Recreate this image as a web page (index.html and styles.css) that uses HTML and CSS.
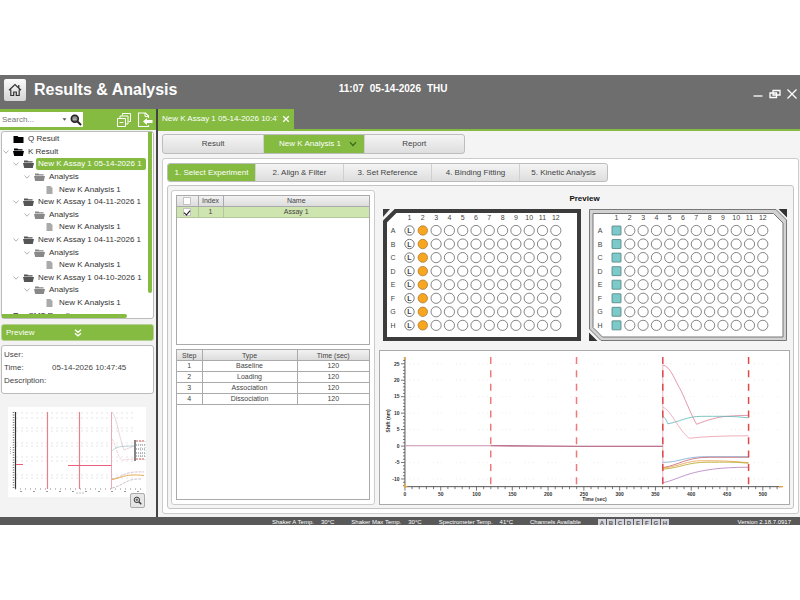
FILE: index.html
```html
<!DOCTYPE html>
<html lang="en">
<head>
<meta charset="utf-8">
<title>Results &amp; Analysis</title>
<link rel="stylesheet" href="styles.css">
</head>
<body>
<svg class="defs" aria-hidden="true">
  <symbol id="folder" viewBox="0 0 10 8"><path d="M0 1h4l1 1h5v6H0z"/></symbol>
  <symbol id="open" viewBox="0 0 11 8"><path d="M1 0.5h3.5l.8.8H9.6v1.2H1z"/><path d="M0 3h11l-1.2 5H1.2z"/></symbol>
  <symbol id="file" viewBox="0 0 6 8"><path d="M0 0h4l2 2v6H0z"/></symbol>
  <symbol id="chev" viewBox="0 0 6 4"><path d="M.5.5 3 3.2 5.5.5" fill="none" stroke="#a0a0a0" stroke-width=".8"/></symbol>
</svg>
<div class="app">
  <header class="top">
    <button class="home" aria-label="Home"><svg viewBox="0 0 14 14"><path d="M1 7.3 7 1.6l6 5.7M10.8 2v2.8M2.8 6.5v6h2.9V9h2.6v3.500h2.9v-6" fill="none" stroke="#333" stroke-width="1.2"/></svg></button>
    <h1>Results &amp; Analysis</h1>
    <div class="clock"><span>11:07</span><span>05-14-2026</span><span>THU</span></div>
    <div class="win">
      <button aria-label="Minimize"><svg viewBox="0 0 12 12"><path d="M1.500 8h9" stroke="#fff" stroke-width="1.300"/></svg></button>
      <button aria-label="Restore"><svg viewBox="0 0 12 12"><path d="M4 2.500h7v4.500H4zM1 5h6.500v4.500H1z" fill="none" stroke="#fff" stroke-width="1.300"/></svg></button>
      <button aria-label="Close"><svg viewBox="0 0 12 12"><path d="M1.500 1.500l9 9m0-9l-9 9" stroke="#fff" stroke-width="1.300"/></svg></button>
    </div>
  </header>

  <div class="body">
    <aside class="side">
      <div class="tools">
        <div class="search">
          <input type="text" aria-label="Search" placeholder="Search...">
          <svg class="drop" viewBox="0 0 4 3"><path d="M0 .3h4L2 2.700z" fill="#555"/></svg>
          <button aria-label="Find"><svg viewBox="0 0 12 12"><circle cx="4.800" cy="4.800" r="3.500" fill="#777" stroke="#222" stroke-width="1.500"/><path d="M7.500 7.500l3.500 3.500" stroke="#222" stroke-width="2"/><path d="M3 4h3.500M3 5.500h3.500" stroke="#ddd" stroke-width=".6"/></svg></button>
        </div>
        <button class="tool" aria-label="Collapse all"><svg viewBox="0 0 16 16"><path d="M1.500 6.500h8v8h-8zM4 6V4h8v8h-2M6.500 3.500v-2h8v8H12.500M3.500 10.500h4" fill="none" stroke="#fff" stroke-width="1"/></svg></button>
        <button class="tool" aria-label="Import"><svg viewBox="0 0 16 16"><path d="M11.500 6V4l-3-3H1.500v13.500h10V13" fill="none" stroke="#fff" stroke-width="1.100"/><path d="M8 1v3.500h3.500" fill="none" stroke="#fff"/><path d="M6 9.500 10 6v2h5.500v3H10v2z" fill="#fff"/></svg></button>
      </div>

      <div class="treebox">
        <div class="clip">
        <ul class="tree">
          <li class="l0 black"><i></i><svg><use href="#folder"/></svg><span>Q Result</span></li>
          <li class="l0 black"><svg class="chev"><use href="#chev"/></svg><svg><use href="#open"/></svg><span>K Result</span></li>
          <li class="l1 sel"><svg class="chev"><use href="#chev"/></svg><svg><use href="#open"/></svg><span>New K Assay 1 05-14-2026 1</span></li>
          <li class="l2"><svg class="chev"><use href="#chev"/></svg><svg><use href="#open"/></svg><span>Analysis</span></li>
          <li class="l3"><svg><use href="#file"/></svg><span>New K Analysis 1</span></li>
          <li class="l1"><svg class="chev"><use href="#chev"/></svg><svg><use href="#open"/></svg><span>New K Assay 1 04-11-2026 1</span></li>
          <li class="l2"><svg class="chev"><use href="#chev"/></svg><svg><use href="#open"/></svg><span>Analysis</span></li>
          <li class="l3"><svg><use href="#file"/></svg><span>New K Analysis 1</span></li>
          <li class="l1"><svg class="chev"><use href="#chev"/></svg><svg><use href="#open"/></svg><span>New K Assay 1 04-11-2026 1</span></li>
          <li class="l2"><svg class="chev"><use href="#chev"/></svg><svg><use href="#open"/></svg><span>Analysis</span></li>
          <li class="l3"><svg><use href="#file"/></svg><span>New K Analysis 1</span></li>
          <li class="l1"><svg class="chev"><use href="#chev"/></svg><svg><use href="#open"/></svg><span>New K Assay 1 04-10-2026 1</span></li>
          <li class="l2"><svg class="chev"><use href="#chev"/></svg><svg><use href="#open"/></svg><span>Analysis</span></li>
          <li class="l3"><svg><use href="#file"/></svg><span>New K Analysis 1</span></li>
          <li class="l0"><i></i><svg><use href="#folder"/></svg><span>CMT Result</span></li>
        </ul>
        </div>
        <div class="vbar"></div>
        <div class="hbar"></div>
      </div>

      <button class="fold">Preview<svg viewBox="0 0 8 8"><path d="M1 .8 4 3.300 7 .8M1 4.300 4 6.800 7 4.300" fill="none" stroke="#fff" stroke-width="1.300"/></svg></button>

      <dl class="info">
        <dt>User:</dt><dd></dd>
        <dt>Time:</dt><dd>05-14-2026 10:47:45</dd>
        <dt>Description:</dt><dd></dd>
      </dl>

      <div class="thumb">
        <svg viewBox="0 0 138 90" aria-label="Assay thumbnail">
          <g fill="none" stroke-width=".6">
            <path d="M8 6h120M8 11h120M8 21h120M8 24h120M8 36h120M8 39h120M8 50h120M8 54h120M8 68h120M8 71h120" stroke="#d5d5d5" stroke-dasharray="2 3"/>
            <path d="M7.500 5v77" stroke="#333" stroke-width="1.200"/>
            <path d="M5.500 5v77" stroke="#777" stroke-width="1.500" stroke-dasharray="1 1.500"/>
            <path d="M2.500 40v8" stroke="#888" stroke-dasharray="1 1"/>
            <path d="M7 82h126" stroke="#888" stroke-width="1" stroke-dasharray="1 4"/>
            <path d="M12 84.500h120" stroke="#999" stroke-width="1" stroke-dasharray="2 11"/>
            <path d="M68 86h8" stroke="#999" stroke-dasharray="2 1"/>
            <path d="M39.500 5v77M71.500 5v77" stroke="#e8808a" stroke-width="1.200"/>
            <path d="M103.500 5v77" stroke="#eda8b5" stroke-width="1"/>
            <path d="M8 57.500h7M60 58.500h43.500" stroke="#e8607a" stroke-width="1.200"/>
            <path d="M104 5c5 6 7 25 12 38l10-4" stroke="#d9b8c4"/>
            <path d="M104 32c4 7 6 19 10 21l12-1" stroke="#eeb0bc" stroke-dasharray="3 1"/>
            <path d="M104 44c3-4 8-5 22-5" stroke="#90bcc0"/>
            <path d="M104 72c12-2 10-8 32-7" stroke="#b9a" stroke-dasharray="3 1"/>
            <path d="M104 72.500c12-2 12-6 32-4" stroke="#e5ad52" stroke-width="1"/>
            <path d="M104 81c11-2 14-10 30-9" stroke="#a9a" stroke-dasharray="3 1"/>
            <path d="M127 33v21" stroke="#333" stroke-width="1.200"/>
            <path d="M128 34h9M128 52h9" stroke="#c55" stroke-width="1" stroke-dasharray="2 1"/>
            <path d="M128 38h9M128 42h9M128 46h9M128 49h9" stroke="#678" stroke-width="1" stroke-dasharray="1 1"/>
            <path d="M133 34v19M137 34v19" stroke="#8a7" stroke-dasharray="1 2"/>
          </g>
        </svg>
        <button class="mag" aria-label="Enlarge"><svg viewBox="0 0 10 10"><circle cx="4.300" cy="4.300" r="3" fill="none" stroke="#333" stroke-width="1.100"/><path d="M6.500 6.500l2.700 2.700" stroke="#333" stroke-width="1.500"/><path d="M2.800 4.300h3M4.300 2.800v3" stroke="#333" stroke-width=".8"/></svg></button>
      </div>
    </aside>

    <main class="main">
      <div class="docs">
        <div class="doc"><span>New K Assay 1 05-14-2026 10:47</span><button aria-label="Close tab"><svg viewBox="0 0 8 8"><path d="M1.200 1.200l5.600 5.600m0-5.600L1.200 6.800" stroke="#fff" stroke-width="1.300"/></svg></button></div>
      </div>
      <div class="work">
        <nav class="seg views">
          <button>Result</button>
          <button class="on">New K Analysis 1<svg viewBox="0 0 8 6"><path d="M1 1.300 4 4.500 7 1.300" fill="none" stroke="#3f6b1c" stroke-width="1.300"/></svg></button>
          <button>Report</button>
        </nav>
        <section class="panel">
          <nav class="seg steps">
            <button class="on">1. Select Experiment</button>
            <button>2. Align &amp; Filter</button>
            <button>3. Set Reference</button>
            <button>4. Binding Fitting</button>
            <button>5. Kinetic Analysis</button>
          </nav>
          <div class="inner">
            <div class="card">
              <div class="box">
                <table class="assays">
                  <colgroup><col class="c-check"><col class="c-index"><col></colgroup>
                  <thead><tr><th><input type="checkbox" aria-label="Select all"></th><th>Index</th><th>Name</th></tr></thead>
                  <tbody><tr><td><input type="checkbox" aria-label="Select Assay 1" checked></td><td>1</td><td>Assay 1</td></tr></tbody>
                </table>
              </div>
              <div class="box">
                <table class="proto">
                  <colgroup><col class="c-step"><col><col class="c-time"></colgroup>
                  <thead><tr><th>Step</th><th>Type</th><th>Time (sec)</th></tr></thead>
                  <tbody>
                    <tr><td>1</td><td>Baseline</td><td>120</td></tr>
                    <tr><td>2</td><td>Loading</td><td>120</td></tr>
                    <tr><td>3</td><td>Association</td><td>120</td></tr>
                    <tr><td>4</td><td>Dissociation</td><td>120</td></tr>
                  </tbody>
                </table>
              </div>
            </div>
            <div class="right">
              <h2>Preview</h2>
              <div class="plates">
                <svg id="sample" viewBox="0 0 198 132" aria-label="Sample plate">
                  <path d="M2 12.500 12.500 2H196v128H2z" fill="#fff" stroke="#3c3c3c" stroke-width="4"/>
                  <path d="M0 0h7L0 8z" fill="#3c3c3c"/>
                </svg>
                <svg id="sensor" viewBox="0 0 198 132" aria-label="Sensor plate">
                  <path d="M.5.500H187l10.500 10.500v120.500H12L.5 120z" fill="#d2d2d2" stroke="#777"/>
                  <path d="M4 4.500H184.500l9.500 9.500v114H13.500L4 118.500z" fill="#fff" stroke="#777"/>
                  <path d="M189.500 0H198v8.500zM0 123.500V132h8.500z" fill="#333"/>
                </svg>
              </div>
              <div class="chart">
                <svg id="plot" viewBox="0 0 410 153" aria-label="Shift over time">
                  <g id="axes"></g>
                  <g fill="none" stroke-width=".8">
                    <path d="M283.500 14v118" stroke="#e3a3b8"/>
                    <path d="M25 95h86" stroke="#c98fb0" stroke-width="1.200"/>
                    <path d="M111 95l86 .5h86.500" stroke="#a8486f" stroke-width="1.200"/>
                    <path d="M283.500 14C291 15 297 32 300 36.500S313 67 317.500 73.500C328 69 340 66 347 65.500S362 64.500 369.500 64.500" stroke="#dc7f94"/>
                    <path d="M283.500 66Q286 66 288.500 73C300 71 308 65.500 322 65.500S355 65 369.500 67" stroke="#5fb5b5"/>
                    <path d="M283.500 56.500C291 58 299 79 310 87.500Q330 85 369.500 85" stroke="#ee9aaa"/>
                    <path d="M283.500 111.500C298 112 306 106 325 106H369.500" stroke="#78a8d0"/>
                    <path d="M283.500 117C300 114 308 106.500 330 106.500H369.500" stroke="#c9606c"/>
                    <path d="M283.500 117.500C302 115 308 110 322 110S352 110 369.500 112" stroke="#eca04c"/>
                    <path d="M283.500 118.500C302 117 308 111.500 328 111.500S352 111 369.500 112.500" stroke="#b3a520"/>
                    <path d="M283.500 132C301 129 310 116.500 369.500 116.500" stroke="#b47cc0"/>
                  </g>
                  <path d="M111 6v128M197 6v128" stroke="#f07878" stroke-width="1.500" stroke-dasharray="7 6.400"/>
                  <path d="M283.500 6v128M369.500 6v128" stroke="#e24848" stroke-width="1.500" stroke-dasharray="7 6.400"/>
                </svg>
              </div>
            </div>
          </div>
        </section>
      </div>
    </main>
  </div>

  <footer class="status">
    <div><span>Shaker A Temp.</span><span>30°C</span></div>
    <div><span>Shaker Max Temp.</span><span>30°C</span></div>
    <div><span>Spectrometer Temp.</span><span>41°C</span></div>
    <div><span>Channels Available</span></div>
    <div class="chan"><b>A</b><b>B</b><b>C</b><b>D</b><b>E</b><b>F</b><b>G</b><b>H</b></div>
    <div class="ver">Version 2.18.7.0917</div>
  </footer>
</div>
<script src="script.js"></script>
</body>
</html>
```
FILE: styles.css
```css
* { box-sizing: border-box; }
body {
  margin: 0;
  min-height: 100vh;
  display: flex;
  align-items: center;
  background: #fff;
  color: #444;
  font: 8px/10px "Liberation Sans", Arial, sans-serif;
}
button { font: inherit; color: inherit; border: 0; padding: 0; margin: 0; background: none; }
svg { display: block; }
.defs { display: none; }
h1, h2, ul, dl, dd { margin: 0; padding: 0; }

.app {
  width: 100%;
  aspect-ratio: 16 / 9;
  display: flex;
  flex-direction: column;
  background: #6e6e6e;
}

/* Title bar */
.top {
  display: grid;
  grid-template-columns: 22px 13fr auto 15fr;
  column-gap: 8px;
  height: 34px;
  padding: 4px 2px 0 4px;
  color: #fff;
}
.home {
  width: 22px;
  height: 22px;
  padding: 4px;
  border-radius: 2px;
  background: linear-gradient(#fafafa, #d4d4d4);
}
h1 { font-size: 16px; line-height: 22px; white-space: nowrap; }
.clock { display: flex; gap: 6px; font-size: 10px; font-weight: bold; line-height: 20px; }
.win { display: flex; align-items: flex-start; justify-content: flex-end; gap: 5px; padding-top: 9px; }
.win svg { width: 12px; height: 12px; }

.body { flex: 1; display: flex; min-height: 0; }

/* Sidebar */
.side {
  width: 158px;
  display: flex;
  flex-direction: column;
  background: #f3f3f3;
  border-right: 2px solid #444;
}
.tools {
  display: flex;
  align-items: center;
  gap: 5px;
  height: 21px;
  padding-right: 3px;
  background: #84bb40;
}
.search { display: flex; align-items: center; width: 83px; height: 15px; margin-right: auto; background: #fff; }
.search input { width: 62px; border: 0; padding: 0 2px; background: none; font: inherit; outline: 0; }
.search input::placeholder { color: #777; }
.drop { width: 5px; height: 3px; margin-right: 3px; }
.search button svg { width: 12px; height: 12px; }
.tool svg { width: 16px; height: 16px; }

.treebox {
  position: relative;
  height: 188px;
  margin: 1px 2px 0 1px;
  border: 1px solid #bbb;
  border-radius: 3px;
  background: #fff;
}
.clip { height: 182px; width: 144px; padding-top: 1px; overflow: hidden; }
.tree {
  display: grid;
  grid-template-rows: repeat(15, 1fr);
  height: 189px;
  list-style: none;
}
.tree li { display: flex; align-items: center; white-space: nowrap; color: #333; fill: #555; }
.tree svg, .tree i { flex: none; width: 11px; height: 8px; margin-right: 2px; }
.tree .chev, .tree i { width: 6px; height: 4px; margin-right: 4px; }
.tree span { padding: 0 2px; line-height: 12px; }
.l0 { padding-left: 1px; }
.l1 { padding-left: 11px; }
.tree .l2 { padding-left: 22px; fill: #888; }
.tree .l3 { padding-left: 42px; fill: #aaa; }
.tree .black { fill: #000; }
.tree .sel span { flex: 1; background: #84bb40; color: #fff; border-radius: 2px; }
.vbar { position: absolute; right: 1px; top: 0; width: 4px; height: 161px; border-radius: 0 0 2px 2px; background: #84bb40; }
.hbar { position: absolute; left: 0; bottom: 0; width: 125px; height: 4px; border-radius: 0 2px 2px 0; background: #84bb40; }

.fold {
  display: flex;
  align-items: center;
  gap: 40px;
  height: 17px;
  margin: 5px 2px 0 1px;
  padding: 0 4px;
  border: 1px solid #b5cf95;
  border-radius: 3px;
  background: #84bb40;
  color: #fff;
}
.fold svg { width: 8px; height: 8px; }

.info {
  display: grid;
  grid-template-columns: 48px 1fr;
  grid-auto-rows: 13px;
  align-items: center;
  height: 49px;
  margin: 4px 2px 0 1px;
  padding: 2px;
  border: 1px solid #bbb;
  border-radius: 3px;
  background: #fff;
}
.thumb { position: relative; margin: 13px 10px 0 8px; background: #fff; }
.mag {
  position: absolute;
  right: 1px;
  bottom: -11px;
  width: 15px;
  height: 15px;
  padding: 2px;
  border: 1px solid #aaa;
  border-radius: 2px;
  background: #e6e6e6;
}

/* Workspace */
.main { flex: 1; display: flex; flex-direction: column; min-width: 0; }
.docs { height: 22px; border-bottom: 2px solid #84bb40; }
.doc {
  display: inline-flex;
  align-items: center;
  gap: 4px;
  height: 20px;
  padding: 0 4px;
  background: #84bb40;
  color: #fff;
}
.doc span { width: 116px; overflow: hidden; white-space: nowrap; }
.doc svg { width: 8px; height: 8px; }
.work {
  flex: 1;
  display: flex;
  flex-direction: column;
  gap: 4px;
  padding: 3px 1px 4px 4px;
  background: #f4f4f4;
}

.seg {
  display: flex;
  align-self: flex-start;
  border: 1px solid #bdbdbd;
  border-radius: 3px;
  overflow: hidden;
  background: linear-gradient(#f4f4f4, #dedede);
}
.seg button { flex: 1; display: flex; align-items: center; justify-content: center; }
.seg button + button { border-left: 1px solid #d0d0d0; }
.seg .on { background: #84bb40; color: #fff; }
.views { display: grid; grid-template-columns: repeat(3, 1fr); width: 303px; height: 20px; }
.views .on { gap: 8px; padding-left: 8px; }
.views svg { width: 8px; height: 6px; }
.steps { width: 441px; height: 19px; }

.panel {
  flex: 1;
  display: flex;
  flex-direction: column;
  gap: 3px;
  padding: 4px;
  border: 1px solid #ccc;
  border-radius: 3px;
  background: #fff;
}
.inner {
  flex: 1;
  display: flex;
  gap: 4px;
  padding: 4px 3px 3px;
  border: 1px solid #c4c4c4;
  border-radius: 3px;
  background: #f4f4f4;
}
.card {
  width: 204px;
  display: flex;
  flex-direction: column;
  gap: 4px;
  padding: 4px;
  border: 1px solid #ccc;
  border-radius: 3px;
  background: #fff;
}
.box { flex: 1; border: 1px solid #aaa; }
table { width: 100%; table-layout: fixed; border-collapse: collapse; font-size: 7px; line-height: 9px; text-align: center; }
th, td { height: 11px; padding: 0; border: 1px solid #aaa; border-width: 0 0 1px 1px; font-weight: normal; }
th:first-child, td:first-child { border-left: 0; }
th { height: 10px; background: linear-gradient(#f2f2f2, #dcdcdc); }
.assays td { background: #cfe5b0; border-color: #b4c79a; }
.c-check { width: 21px; }
.c-index { width: 25px; }
.c-step { width: 25px; }
.c-time { width: 72px; }
table input {
  appearance: none;
  display: block;
  width: 8px;
  height: 8px;
  margin: 0 auto;
  border: 1px solid #c4c4c4;
  background: #fff;
}
table input:checked::after {
  content: "";
  display: block;
  width: 3px;
  height: 5px;
  margin: 0 auto;
  border: solid #111;
  border-width: 0 1px 1px 0;
  transform: rotate(40deg);
}

.right { flex: 1; min-width: 0; display: flex; flex-direction: column; }
h2 { font-size: 8px; line-height: 18px; height: 19px; text-align: center; color: #111; }
.plates { display: flex; gap: 8px; padding: 0 3px 0 4px; margin-bottom: 9px; }
.plates svg { flex: 1; min-width: 0; }
.plates text { font-size: 7px; text-anchor: middle; fill: #444; }
.plates .mark { font-weight: bold; }
.chart { border: 1px solid #aaa; background: #fff; }
.chart text { font-size: 5px; font-weight: bold; fill: #333; }

/* Status bar */
.status {
  display: flex;
  gap: 17px;
  height: 8px;
  overflow: hidden;
  padding: 0 9px 0 34%;
  background: #595959;
  color: #fff;
  font-size: 6px;
  line-height: 11px;
  white-space: nowrap;
}
.status div { display: flex; gap: 7px; }
.status .chan { gap: 1px; padding-top: 2px; }
.chan b { width: 8px; height: 8px; line-height: 8px; text-align: center; background: #d4d4dc; color: #555; }
.status .ver { margin-left: auto; }
```
FILE: script.js
```js
const NS = 'http://www.w3.org/2000/svg';

function add(parent, tag, attrs, text) {
  const el = document.createElementNS(NS, tag);
  for (const key in attrs) el.setAttribute(key, attrs[key]);
  if (text !== undefined) el.textContent = text;
  parent.appendChild(el);
}

// Draws the labels and the 96 wells of a plate; fill() draws the used wells.
function plate(id, left, letterX, fill) {
  const svg = document.getElementById(id);
  for (let c = 0; c < 12; c++) {
    add(svg, 'text', { x: left + c * 13.3, y: 11 }, c + 1);
  }
  for (let r = 0; r < 8; r++) {
    const y = 21.5 + r * 13.55;
    add(svg, 'text', { x: letterX, y: y + 2.5 }, 'ABCDEFGH'[r]);
    for (let c = 0; c < 12; c++) {
      const x = left + c * 13.3;
      if (!fill(svg, c, x, y)) {
        add(svg, 'circle', { cx: x, cy: y, r: 5.1, fill: '#fff', stroke: '#666', 'stroke-width': 0.8 });
      }
    }
  }
}

plate('sample', 26.5, 10, (svg, c, x, y) => {
  if (c > 1) return false;
  add(svg, 'circle', { cx: x, cy: y, r: 4.7, fill: c ? '#f9a61f' : '#fff', stroke: c ? '#a87a3a' : '#555', 'stroke-width': 0.8 });
  if (c === 0) add(svg, 'text', { x: x, y: y + 2.5, class: 'mark' }, 'L');
  return true;
});

plate('sensor', 27.5, 11, (svg, c, x, y) => {
  if (c > 0) return false;
  add(svg, 'rect', { x: x - 4.5, y: y - 4.5, width: 9, height: 9, rx: 0.5, fill: '#7dcaca', stroke: '#557f7f', 'stroke-width': 0.8 });
  return true;
});

const axes = document.getElementById('axes');
const px = t => 25 + t * 0.7175;
const py = v => 95.3 - v * 3.3;
let ticks = '';
for (let v = -12; v <= 26; v++) {
  const major = v % 5 === 0;
  ticks += `M25 ${py(v)}h${major ? -4 : -2}`;
  if (major) {
    add(axes, 'text', { x: 19.5, y: py(v) + 1.8, 'text-anchor': 'end' }, v);
    if (v) add(axes, 'path', { d: `M30 ${py(v)}H400`, stroke: '#e2e2e2', 'stroke-width': 0.7, 'stroke-dasharray': '1 3 1 3 1 14' });
  }
}
for (let t = 0; t <= 520; t += 10) {
  const major = t % 50 === 0;
  ticks += `M${px(t)} 136v${major ? 4 : 2.5}`;
  if (major) add(axes, 'text', { x: px(t), y: 145, 'text-anchor': 'middle' }, t);
}
add(axes, 'path', { d: ticks, stroke: '#555', 'stroke-width': 0.8 });
add(axes, 'path', { d: 'M25 6v130h378', stroke: '#555', 'stroke-width': 1, fill: 'none' });
add(axes, 'path', { d: 'M24.500 6v3M24.500 133v3h3M400 136h4', stroke: '#f0a030', 'stroke-width': 1.2, fill: 'none' });
add(axes, 'text', { x: 215, y: 150.5, 'text-anchor': 'middle' }, 'Time (sec)');
add(axes, 'text', { transform: 'translate(10.5 70) rotate(-90)', 'text-anchor': 'middle' }, 'Shift (nm)');
```
